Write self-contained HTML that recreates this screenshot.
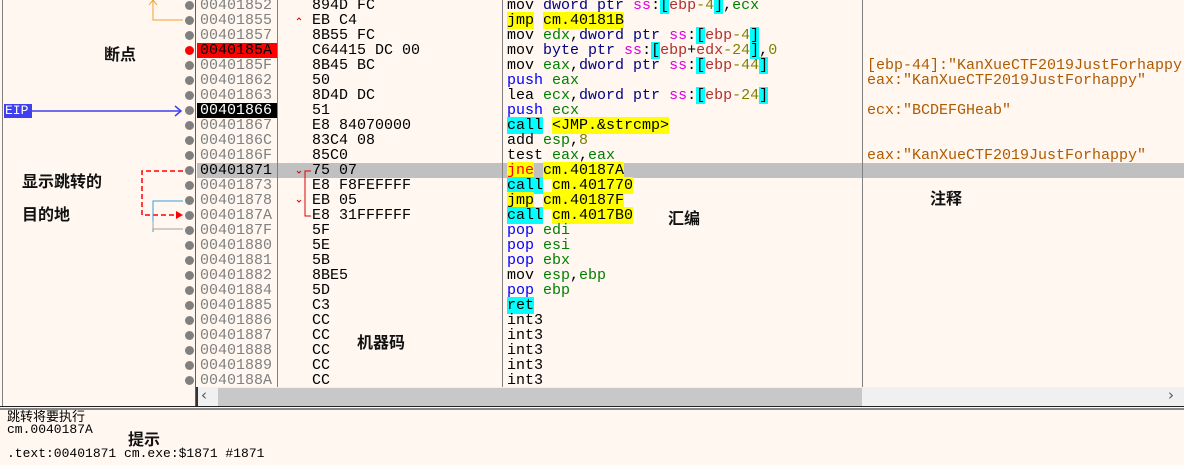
<!DOCTYPE html>
<html><head><meta charset="utf-8"><style>
*{margin:0;padding:0;box-sizing:border-box}
body{width:1184px;height:465px;background:#fff7f0;position:relative;overflow:hidden;font-family:"Liberation Mono","Noto Sans CJK SC",monospace;font-size:15px}
.a{position:absolute;white-space:pre;line-height:15px;height:15px}
.ad{left:197px;width:80px;padding-left:3px;color:#808080}
.by{left:312px;color:#000}
.as{left:507px;color:#000}
.cm{left:867px;color:#b05a00}
.b{position:absolute;left:185px;width:9px;height:9px;border-radius:50%;background:#808080}
.lbl{position:absolute;font-family:"Noto Sans CJK SC",sans-serif;font-weight:bold;font-size:16px;color:#111;white-space:nowrap}
.vl{position:absolute;top:0;width:1px;background:#808080}
.k{color:#000080}.s{color:#e000e0}.r{color:#b03030}.n{color:#808000}.g{color:#008000}.p{color:#0000ff}
.br{background:#00ffff;color:#000}.y{background:#ffff00}.c{background:#00ffff}
</style></head><body>
<div style="position:absolute;left:197px;top:163px;width:987px;height:15px;background:#c0c0c0"></div>
<div class="vl" style="left:2px;height:407px"></div>
<div class="vl" style="left:195px;height:407px;background:#606060"></div>
<div class="vl" style="left:277px;height:387px"></div>
<div class="vl" style="left:502px;height:387px"></div>
<div class="vl" style="left:862px;height:387px"></div>

<!-- rows -->
<div class="a ad" style="top:-2px">00401852</div><div class="a by" style="top:-2px">894D FC</div><div class="a as" style="top:-2px">mov <span class="k">dword ptr</span> <span class="s">ss</span>:<span class="br">[</span><span class="r">ebp</span><span class="n">-4</span><span class="br">]</span>,<span class="g">ecx</span></div>
<div class="a ad" style="top:13px">00401855</div><div class="a by" style="top:13px">EB C4</div><div class="a as" style="top:13px"><span class="y">jmp</span> <span class="y">cm.40181B</span></div>
<div class="a ad" style="top:28px">00401857</div><div class="a by" style="top:28px">8B55 FC</div><div class="a as" style="top:28px">mov <span class="g">edx</span>,<span class="k">dword ptr</span> <span class="s">ss</span>:<span class="br">[</span><span class="r">ebp</span><span class="n">-4</span><span class="br">]</span></div>
<div class="a ad" style="top:43px;background:#ff0000;color:#000">0040185A</div><div class="a by" style="top:43px">C64415 DC 00</div><div class="a as" style="top:43px">mov <span class="k">byte ptr</span> <span class="s">ss</span>:<span class="br">[</span><span class="r">ebp</span>+<span class="r">edx</span><span class="n">-24</span><span class="br">]</span>,<span class="n">0</span></div>
<div class="a ad" style="top:58px">0040185F</div><div class="a by" style="top:58px">8B45 BC</div><div class="a as" style="top:58px">mov <span class="g">eax</span>,<span class="k">dword ptr</span> <span class="s">ss</span>:<span class="br">[</span><span class="r">ebp</span><span class="n">-44</span><span class="br">]</span></div>
<div class="a ad" style="top:73px">00401862</div><div class="a by" style="top:73px">50</div><div class="a as" style="top:73px"><span class="p">push</span> <span class="g">eax</span></div>
<div class="a ad" style="top:88px">00401863</div><div class="a by" style="top:88px">8D4D DC</div><div class="a as" style="top:88px">lea <span class="g">ecx</span>,<span class="k">dword ptr</span> <span class="s">ss</span>:<span class="br">[</span><span class="r">ebp</span><span class="n">-24</span><span class="br">]</span></div>
<div class="a ad" style="top:103px;background:#000;color:#fff">00401866</div><div class="a by" style="top:103px">51</div><div class="a as" style="top:103px"><span class="p">push</span> <span class="g">ecx</span></div>
<div class="a ad" style="top:118px">00401867</div><div class="a by" style="top:118px">E8 84070000</div><div class="a as" style="top:118px"><span class="c">call</span> <span class="y">&lt;JMP.&amp;strcmp&gt;</span></div>
<div class="a ad" style="top:133px">0040186C</div><div class="a by" style="top:133px">83C4 08</div><div class="a as" style="top:133px">add <span class="g">esp</span>,<span class="n">8</span></div>
<div class="a ad" style="top:148px">0040186F</div><div class="a by" style="top:148px">85C0</div><div class="a as" style="top:148px">test <span class="g">eax</span>,<span class="g">eax</span></div>
<div class="a ad" style="top:163px;color:#000">00401871</div><div class="a by" style="top:163px">75 07</div><div class="a as" style="top:163px"><span class="y" style="color:#f00">jne</span> <span class="y">cm.40187A</span></div>
<div class="a ad" style="top:178px">00401873</div><div class="a by" style="top:178px">E8 F8FEFFFF</div><div class="a as" style="top:178px"><span class="c">call</span> <span class="y">cm.401770</span></div>
<div class="a ad" style="top:193px">00401878</div><div class="a by" style="top:193px">EB 05</div><div class="a as" style="top:193px"><span class="y">jmp</span> <span class="y">cm.40187F</span></div>
<div class="a ad" style="top:208px">0040187A</div><div class="a by" style="top:208px">E8 31FFFFFF</div><div class="a as" style="top:208px"><span class="c">call</span> <span class="y">cm.4017B0</span></div>
<div class="a ad" style="top:223px">0040187F</div><div class="a by" style="top:223px">5F</div><div class="a as" style="top:223px"><span class="p">pop</span> <span class="g">edi</span></div>
<div class="a ad" style="top:238px">00401880</div><div class="a by" style="top:238px">5E</div><div class="a as" style="top:238px"><span class="p">pop</span> <span class="g">esi</span></div>
<div class="a ad" style="top:253px">00401881</div><div class="a by" style="top:253px">5B</div><div class="a as" style="top:253px"><span class="p">pop</span> <span class="g">ebx</span></div>
<div class="a ad" style="top:268px">00401882</div><div class="a by" style="top:268px">8BE5</div><div class="a as" style="top:268px">mov <span class="g">esp</span>,<span class="g">ebp</span></div>
<div class="a ad" style="top:283px">00401884</div><div class="a by" style="top:283px">5D</div><div class="a as" style="top:283px"><span class="p">pop</span> <span class="g">ebp</span></div>
<div class="a ad" style="top:298px">00401885</div><div class="a by" style="top:298px">C3</div><div class="a as" style="top:298px"><span class="c">ret</span></div>
<div class="a ad" style="top:313px">00401886</div><div class="a by" style="top:313px">CC</div><div class="a as" style="top:313px">int3</div>
<div class="a ad" style="top:328px">00401887</div><div class="a by" style="top:328px">CC</div><div class="a as" style="top:328px">int3</div>
<div class="a ad" style="top:343px">00401888</div><div class="a by" style="top:343px">CC</div><div class="a as" style="top:343px">int3</div>
<div class="a ad" style="top:358px">00401889</div><div class="a by" style="top:358px">CC</div><div class="a as" style="top:358px">int3</div>
<div class="a ad" style="top:373px">0040188A</div><div class="a by" style="top:373px">CC</div><div class="a as" style="top:373px">int3</div>

<div class="a cm" style="top:58px">[ebp-44]:"KanXueCTF2019JustForhappy"</div>
<div class="a cm" style="top:73px">eax:"KanXueCTF2019JustForhappy"</div>
<div class="a cm" style="top:103px">ecx:"BCDEFGHeab"</div>
<div class="a cm" style="top:148px">eax:"KanXueCTF2019JustForhappy"</div>

<!-- bullets -->
<div class="b" style="top:1px"></div><div class="b" style="top:16px"></div><div class="b" style="top:31px"></div><div class="b" style="top:46px;background:#f00"></div><div class="b" style="top:61px"></div><div class="b" style="top:76px"></div><div class="b" style="top:91px"></div><div class="b" style="top:106px"></div><div class="b" style="top:121px"></div><div class="b" style="top:136px"></div><div class="b" style="top:151px"></div><div class="b" style="top:166px"></div><div class="b" style="top:181px"></div><div class="b" style="top:196px"></div><div class="b" style="top:211px"></div><div class="b" style="top:226px"></div><div class="b" style="top:241px"></div><div class="b" style="top:256px"></div><div class="b" style="top:271px"></div><div class="b" style="top:286px"></div><div class="b" style="top:301px"></div><div class="b" style="top:316px"></div><div class="b" style="top:331px"></div><div class="b" style="top:346px"></div><div class="b" style="top:361px"></div><div class="b" style="top:376px"></div>

<svg style="position:absolute;left:0;top:0" width="320" height="240">
<polyline points="153,0 153,20 183,20" fill="none" stroke="#f0a030" stroke-width="1"/>
<polyline points="149,5 153,0 157,5" fill="none" stroke="#f0a030"/>
<line x1="31" y1="111" x2="180" y2="111" stroke="#4040f0" stroke-width="1.5"/>
<polyline points="175,106 181,111 175,116" fill="none" stroke="#4040f0" stroke-width="1.5"/>
<polyline points="183,171 142,171 142,215 180,215" fill="none" stroke="#f00" stroke-width="1.5" stroke-dasharray="5,3"/>
<polygon points="176,211 183,215 176,219" fill="#f00"/>
<polyline points="183,201 153,201 153,232" fill="none" stroke="#30a0e0"/>
<polyline points="153,221 153,229 183,229" fill="none" stroke="#a0a0a0"/>
<polyline points="297,20 299,18 301,20" fill="none" stroke="#d00"/>
<polyline points="297,171 299,173 301,171" fill="none" stroke="#d00"/>
<polyline points="297,200 299,202 301,200" fill="none" stroke="#d00"/>
<polyline points="311,171 305,171 305,216 311,216" fill="none" stroke="#d00"/>
</svg>
<div style="position:absolute;left:4px;top:104px;width:28px;height:14px;background:#4040f0;color:#fff;font-size:13px;line-height:14px;padding-left:1px">EIP</div>

<div class="lbl" style="left:104px;top:41px">断点</div>
<div class="lbl" style="left:22px;top:168px">显示跳转的</div>
<div class="lbl" style="left:22px;top:201px">目的地</div>
<div class="lbl" style="left:668px;top:205px">汇编</div>
<div class="lbl" style="left:930px;top:185px">注释</div>
<div class="lbl" style="left:357px;top:329px">机器码</div>

<!-- scrollbar -->
<div style="position:absolute;left:196px;top:387px;width:988px;height:20px;background:#f0f0f0;border-left:2px solid #333"></div>
<div style="position:absolute;left:218px;top:388px;width:644px;height:18px;background:#c8c8c8"></div>
<div style="position:absolute;left:201px;top:386px;color:#555;font-size:15px;font-family:'DejaVu Sans',sans-serif">‹</div>
<div style="position:absolute;left:1168px;top:386px;color:#555;font-size:15px;font-family:'DejaVu Sans',sans-serif">›</div>
<div style="position:absolute;left:0;top:406px;width:1184px;height:1px;background:#222"></div>
<div style="position:absolute;left:0;top:408px;width:1184px;height:2px;background:#888"></div>

<div class="a" style="left:7px;top:408px;font-size:13px;font-family:'Noto Sans CJK SC',sans-serif">跳转将要执行</div>
<div class="a" style="left:7px;top:422px;font-size:13px">cm.0040187A</div>
<div class="a" style="left:7px;top:446px;font-size:13px">.text:00401871 cm.exe:$1871 #1871</div>
<div class="lbl" style="left:128px;top:426px">提示</div>
</body></html>
